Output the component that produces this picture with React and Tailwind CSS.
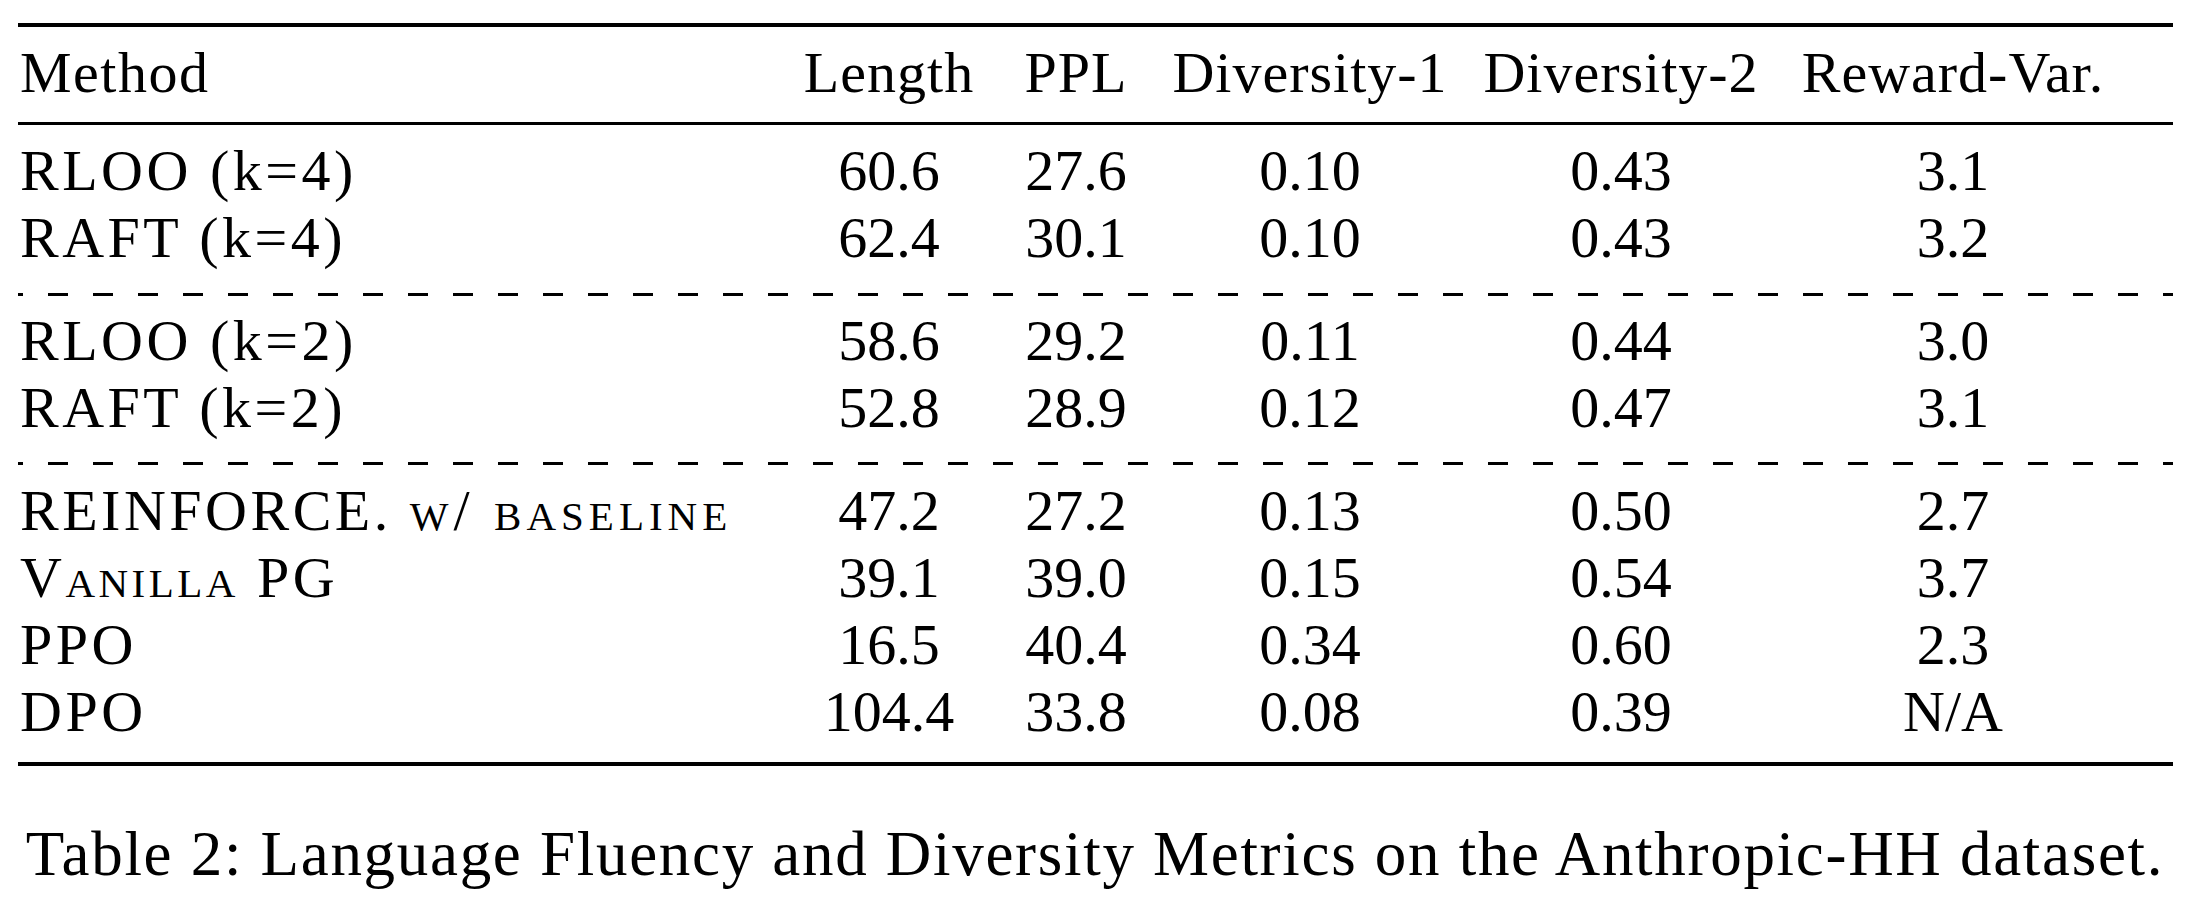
import React from "react";

const groups = [
  [
    ["RLOO (k=4)", "60.6", "27.6", "0.10", "0.43", "3.1"],
    ["RAFT (k=4)", "62.4", "30.1", "0.10", "0.43", "3.2"],
  ],
  [
    ["RLOO (k=2)", "58.6", "29.2", "0.11", "0.44", "3.0"],
    ["RAFT (k=2)", "52.8", "28.9", "0.12", "0.47", "3.1"],
  ],
  [
    ["REINFORCE", "47.2", "27.2", "0.13", "0.50", "2.7"],
    ["VANILLA", "39.1", "39.0", "0.15", "0.54", "3.7"],
    ["PPO", "16.5", "40.4", "0.34", "0.60", "2.3"],
    ["DPO", "104.4", "33.8", "0.08", "0.39", "N/A"],
  ],
];

function MethodLabel({ name }) {
  if (name === "REINFORCE") {
    return (
      <>
        REINFORCE. <span className="[font-variant:small-caps] tracking-[5px]">w/ baseline</span>
      </>
    );
  }
  if (name === "VANILLA") {
    return (
      <>
        <span className="[font-variant:small-caps]">Vanilla</span> PG
      </>
    );
  }
  return <>{name}</>;
}

function Row({ cells, header }) {
  return (
    <div className="font-['Liberation_Serif'] grid grid-cols-[772px_198px_176px_292px_330px_334px] h-[67px] leading-[67px] whitespace-nowrap">
      <div className={header ? "pl-[2px] tracking-[1.5px]" : "pl-[2px] tracking-[3.5px]"}>
        {header ? cells[0] : <MethodLabel name={cells[0]} />}
      </div>
      {cells.slice(1).map((c, i) => (
        <div key={i} className={header ? "text-center tracking-[1px]" : "text-center"}>
          {c}
        </div>
      ))}
    </div>
  );
}

const dash =
  "h-[3px] w-full bg-[image:repeating-linear-gradient(to_right,#000_0px,#000_5px,transparent_5px,transparent_30px,#000_30px,#000_45px)]";

export default function App() {
  return (
    <div className="[font-family:Liberation_Serif] w-[2190px] h-[906px] bg-white text-black overflow-hidden">
      <div className="pl-[18px] pr-[17px] pt-[23px] flex flex-col text-[58px]">
        <div className="h-[4px] bg-black" />
        <div className="h-[12px]" />
        <Row header cells={["Method", "Length", "PPL", "Diversity-1", "Diversity-2", "Reward-Var."]} />
        <div className="h-[16px]" />
        <div className="h-[3px] bg-black" />
        <div className="h-[12px]" />
        {groups[0].map((r, i) => (
          <Row key={i} cells={r} />
        ))}
        <div className="h-[22px]" />
        <div className={dash} />
        <div className="h-[11px]" />
        {groups[1].map((r, i) => (
          <Row key={i} cells={r} />
        ))}
        <div className="h-[21px]" />
        <div className={dash} />
        <div className="h-[12px]" />
        {groups[2].map((r, i) => (
          <Row key={i} cells={r} />
        ))}
        <div className="h-[17px]" />
        <div className="h-[4px] bg-black" />
      </div>
      <div className="font-['Liberation_Serif'] mt-[48px] text-center text-[63px] h-[80px] leading-[80px] whitespace-nowrap tracking-[1.7px]">
        Table 2: Language Fluency and Diversity Metrics on the Anthropic-HH dataset.
      </div>
    </div>
  );
}
